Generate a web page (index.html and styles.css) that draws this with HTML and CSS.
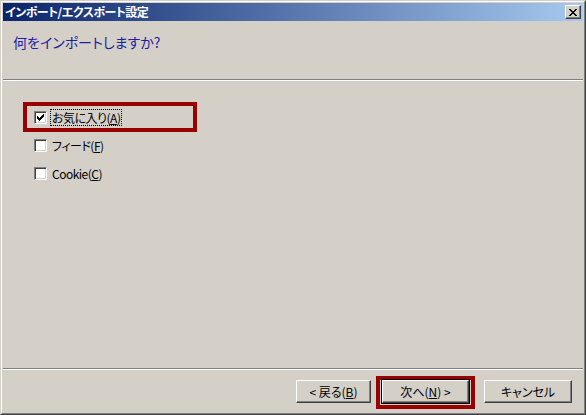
FILE: index.html
```html
<!DOCTYPE html>
<html lang="ja">
<head>
    <meta charset="UTF-8">
    <title>インポート/エクスポート設定</title>
    <link rel="stylesheet" href="styles.css">
</head>
<body>
<div class="window">
  <div class="frame">
    <div class="titlebar">
      <span class="titlebar__text">インポート/エクスポート設定</span>
      <span class="titlebar__close">
        <svg width="8" height="7" viewBox="0 0 8 7">
          <path d="M0 0h2v1h1v1h2v-1h1v-1h2v1h-1v1h-1v1h-1v1h1v1h1v1h1v1h-2v-1h-1v-1h-2v1h-1v1h-2v-1h1v-1h1v-1h1v-1h-1v-1h-1v-1h-1z" fill="#000"/>
        </svg>
      </span>
    </div>

    <div class="header">
      <h1 class="header__title">何をインポートしますか?</h1>
    </div>
    <div class="sep"></div>

    <div class="content">
      <label class="check">
        <span class="check__box checked">
          <svg width="7" height="7" viewBox="0 0 7 7"><path d="M0 2h1v1h1v1h1v-1h1v-1h1v-1h1v-1h1v3h-1v1h-1v1h-1v1h-1v1h-1v-1h-1v-1h-1z" fill="#000"/></svg>
        </span>
        <span class="check__label focus">お気に入り(<u>A</u>)</span>
      </label>
      <label class="check">
        <span class="check__box"></span>
        <span class="check__label">フィード(<u>F</u>)</span>
      </label>
      <label class="check">
        <span class="check__box"></span>
        <span class="check__label">Cookie(<u>C</u>)</span>
      </label>
      <div class="mark mark--fav"></div>
    </div>

    <div class="sep"></div>
    <div class="footer">
      <button class="btn">&lt; 戻る(<u>B</u>)</button>
      <span class="btn-wrap">
        <button class="btn btn--default">次へ(<u>N</u>) &gt;</button>
      </span>
      <button class="btn btn--cancel">キャンセル</button>
    </div>
  </div>
</div>
</body>
</html>
```

FILE: styles.css
```css
html, body {
  margin: 0;
  padding: 0;
}

body {
  background: #d4d0c8;
  font-family: "Noto Sans CJK JP", "Liberation Sans", sans-serif;
  font-size: 12px;
  font-feature-settings: "palt";
  color: #000;
}

.window {
  width: 586px;
  height: 415px;
  box-sizing: border-box;
  border: 1px solid;
  border-color: #d4d0c8 #404040 #404040 #d4d0c8;
  background: #d4d0c8;
}

.frame {
  height: 100%;
  box-sizing: border-box;
  border: 1px solid;
  border-color: #fff #808080 #808080 #fff;
  padding: 1px;
  display: flex;
  flex-direction: column;
}

/* title bar */
.titlebar {
  height: 18px;
  flex: none;
  display: flex;
  align-items: center;
  justify-content: space-between;
  background: linear-gradient(to right, #0a246a, #a6caf0);
  padding: 0 2px 0 2px;
}

.titlebar__text {
  color: #fff;
  font-weight: bold;
  font-size: 12px;
  line-height: 18px;
  letter-spacing: -0.5px;
}

.titlebar__close {
  width: 16px;
  height: 14px;
  box-sizing: border-box;
  display: flex;
  align-items: center;
  justify-content: center;
  background: #d4d0c8;
  border: 1px solid;
  border-color: #fff #404040 #404040 #fff;
  box-shadow: inset -1px -1px 0 #808080;
}

/* header */
.header {
  height: 58px;
  flex: none;
  padding: 10px 0 0 10px;
  box-sizing: border-box;
}

.header__title {
  margin: 0;
  font-size: 14px;
  font-weight: normal;
  color: #1e1ea0;
  line-height: 22px;
}

.sep {
  flex: none;
  border-top: 1px solid #808080;
  border-bottom: 1px solid #fff;
}

/* options */
.content {
  flex: 1;
  position: relative;
  padding: 29px 0 0 31px;
  display: flex;
  flex-direction: column;
  gap: 13px;
}

.check {
  display: flex;
  align-items: center;
  gap: 4px;
  height: 15px;
}

.check__box {
  width: 13px;
  height: 13px;
  box-sizing: border-box;
  background: #fff;
  border: 1px solid;
  border-color: #808080 #fff #fff #808080;
  box-shadow: inset 1px 1px 0 #404040, inset -1px -1px 0 #d4d0c8;
  display: flex;
  align-items: center;
  justify-content: center;
}

.check__label {
  line-height: 15px;
  padding: 0 1px;
  letter-spacing: -0.5px;
}

.check__label.focus {
  outline: 1px dotted #000;
}

.mark {
  position: absolute;
  border: 4px solid #990000;
  box-sizing: border-box;
}

.mark--fav {
  left: 20px;
  top: 21px;
  width: 174px;
  height: 30px;
}

/* buttons */
.footer {
  height: 42px;
  flex: none;
  display: flex;
  align-items: flex-start;
  justify-content: flex-end;
  padding: 10px 11px 0 0;
  box-sizing: border-box;
}

.btn {
  width: 75px;
  height: 23px;
  padding: 0;
  font-family: inherit;
  font-size: 12px;
  font-feature-settings: "palt";
  color: #000;
  background: #d4d0c8;
  border: 1px solid;
  border-color: #fff #404040 #404040 #fff;
  box-shadow: inset -1px -1px 0 #808080;
}

.btn-wrap {
  display: flex;
  border: 4px solid #990000;
  margin: -4px 9px 0 5px;
  padding: 0 2px 2px 2px;
}

.btn--default {
  width: 87px;
  outline: 1px solid #000;
}

.btn--cancel {
  width: 88px;
}
```
